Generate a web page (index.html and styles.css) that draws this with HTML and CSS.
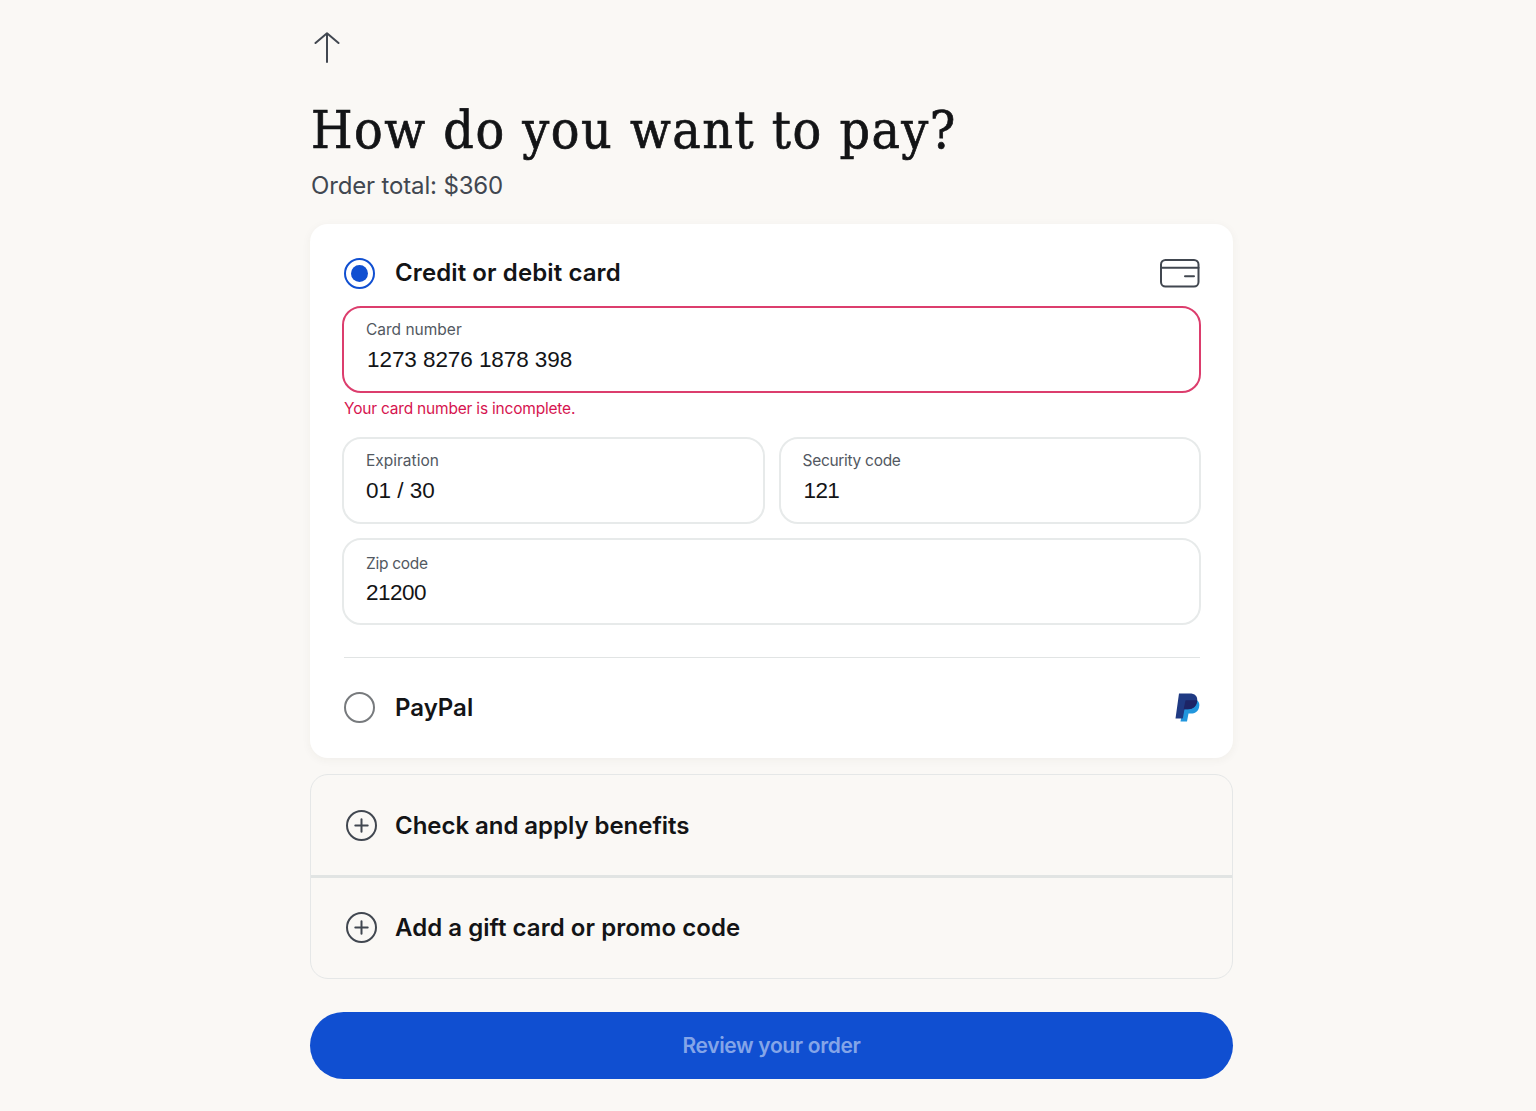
FILE: index.html
```html
<!DOCTYPE html>
<html lang="en">

<head>
    <meta charset="UTF-8">
    <meta name="viewport" content="width=device-width, initial-scale=1.0">
    <title>Payment</title>
    <link rel="stylesheet" href="styles.css">
</head>

<body>
    <main class="container">
        <a class="back" href="#" aria-label="Back">
            <svg width="26" height="32" viewBox="0 0 26 32">
                <path d="M13 30V1.500M1.500 11L13 1.300L24.500 11" />
            </svg>
        </a>
        <h1>How do you want to pay?</h1>
        <p class="total">Order total: $360</p>

        <section class="card">
            <div class="method">
                <span class="radio checked"></span>
                <h2 class="t-credit">Credit or debit card</h2>
                <svg class="card-icon" width="40" height="29" viewBox="0 0 40 29">
                    <rect x="1" y="1" width="37.500" height="26.500" rx="4.500" />
                    <path d="M1 8.800H38.500M25 17.200H34" />
                </svg>
            </div>
            <div class="fields">
                <div class="field error">
                    <label>Card number</label>
                    <div class="value v-card">1273 8276 1878 398</div>
                </div>
                <p class="error-text">Your card number is incomplete.</p>
                <div class="row">
                    <div class="field">
                        <label>Expiration</label>
                        <div class="value">01 / 30</div>
                    </div>
                    <div class="field">
                        <label class="tight">Security code</label>
                        <div class="value v-code">121</div>
                    </div>
                </div>
                <div class="field zip">
                    <label class="tight">Zip code</label>
                    <div class="value">21200</div>
                </div>
            </div>
            <div class="method paypal">
                <span class="radio"></span>
                <h2>PayPal</h2>
                <svg class="paypal-icon" width="25" height="29" viewBox="0 0 25 29">
                    <path fill="#2196dd" d="M10 7H21.500C24 8.500 25 11 24 14.500C23 18.500 20 20.500 16 20.500H13.500L12 28.500H5.500L6.300 24Z" />
                    <path fill="#1f3a83" d="M4 0.500H14.500C20 0.500 22.700 3 22.200 8C21.500 13.500 18 16.300 12.500 16.300H9.500L7.800 25.500H0.500Z" />
                    <path fill="#1d2465" d="M10.500 7.300H22.200C21.800 13.300 18.200 16.300 12.500 16.300H8.700Z" />
                </svg>
            </div>
        </section>

        <section class="extras">
            <div class="extra">
                <svg class="plus" width="31" height="31" viewBox="0 0 31 31">
                    <circle cx="15.500" cy="15.500" r="14.500" />
                    <path d="M9.300 15.500H21.700M15.500 9.300V21.700" />
                </svg>
                <h2>Check and apply benefits</h2>
            </div>
            <div class="extra">
                <svg class="plus" width="31" height="31" viewBox="0 0 31 31">
                    <circle cx="15.500" cy="15.500" r="14.500" />
                    <path d="M9.300 15.500H21.700M15.500 9.300V21.700" />
                </svg>
                <h2 class="t-gift">Add a gift card or promo code</h2>
            </div>
        </section>

        <button class="btn" type="button" disabled>Review your order</button>
    </main>
</body>

</html>
```
FILE: styles.css
```css
* {
    margin: 0;
    padding: 0;
    box-sizing: border-box;
}

body {
    background-color: #faf8f5;
    color: #131416;
    font-family: Inter, "Liberation Sans", sans-serif;
    padding: 32px 0 32px 7px;
}

.container {
    width: 923px;
    margin: 0 auto;
}

.back {
    display: block;
    width: 26px;
    height: 32px;
    margin-left: 4px;
}

svg {
    display: block;
    fill: none;
    stroke: #414750;
    stroke-width: 2;
    stroke-linecap: round;
    stroke-linejoin: round;
}

h1 {
    font-family: "DejaVu Serif Condensed", "DejaVu Serif", serif;
    font-stretch: condensed;
    font-size: 53px;
    font-weight: 400;
    line-height: 70px;
    letter-spacing: 1.53px;
    margin-top: 31px;
    padding-left: 1px;
    white-space: nowrap;
    -webkit-text-stroke: 0.7px #131416;
}

.total {
    font-size: 24px;
    line-height: 32px;
    color: #414750;
    margin-top: 5px;
    padding-left: 1px;
    letter-spacing: -0.15px;
}

/* payment methods */

.card {
    height: 534px;
    margin-top: 22px;
    padding: 33px 32px 0;
    border-radius: 18px;
    background-color: white;
    box-shadow: 0 2px 10px rgba(60, 50, 30, 0.05);
}

.method {
    display: flex;
    align-items: center;
    height: 32px;
    padding: 0 1px 0 2px;
}

h2 {
    font-size: 24px;
    font-weight: 600;
    line-height: 32px;
    margin-left: 20px;
    white-space: nowrap;
}

.t-credit {
    letter-spacing: 0.1px;
}

.radio {
    display: flex;
    align-items: center;
    justify-content: center;
    width: 31px;
    height: 31px;
    border: 2px solid #777a7d;
    border-radius: 50%;
}

.radio.checked {
    border-color: #104fd1;
}

.radio.checked::after {
    content: "";
    width: 17px;
    height: 17px;
    border-radius: 50%;
    background-color: #104fd1;
}

.card-icon,
.paypal-icon {
    margin-left: auto;
}

.paypal-icon {
    stroke: none;
}

.fields {
    margin: 17px 0 0;
}

.field {
    height: 87px;
    padding: 12px 22px 0;
    border: 2px solid #e7eaea;
    border-radius: 19px;
}

.field.error {
    border-color: #dc3d6d;
}

.field label {
    display: block;
    font-size: 15.5px;
    line-height: 20px;
    color: #525861;
}

.field .tight {
    letter-spacing: -0.3px;
}

.value {
    font-family: "Liberation Sans", Arial, sans-serif;
    font-size: 22.5px;
    line-height: 30px;
    margin-top: 5px;
}

.v-card,
.v-code {
    padding-left: 1px;
    letter-spacing: -0.07px;
}

.v-code {
    letter-spacing: -0.6px;
}

.error-text {
    font-size: 15.5px;
    line-height: 20px;
    margin: 6px 0 18px 2px;
    color: #d6144f;
    letter-spacing: -0.2px;
}

.row {
    display: grid;
    grid-template-columns: 1fr 1fr;
    gap: 14px;
    margin-bottom: 14px;
}

.zip label {
    margin-top: 2px;
}

.zip .value {
    margin-top: 4px;
    letter-spacing: -0.5px;
}

.paypal {
    height: 100px;
    margin: 32px 1px 0 2px;
    padding: 0;
    border-top: 1px solid #e1e4e4;
}

/* benefits and promo */

.extras {
    margin-top: 16px;
    border: 1px solid #e5e7e7;
    border-radius: 18px;
}

.extra {
    display: flex;
    align-items: center;
    height: 100px;
    padding: 1px 0 0 35px;
}

.extra + .extra {
    height: 103px;
    padding: 0 0 1px 35px;
    border-top: 3px solid #e1e4e3;
}

.extra h2 {
    margin-left: 18px;
    letter-spacing: -0.04px;
}

.extra .t-gift {
    letter-spacing: 0.04px;
}

.btn {
    display: block;
    width: 100%;
    height: 67px;
    margin-top: 33px;
    border: none;
    border-radius: 34px;
    background-color: #104fd1;
    color: #84a5e8;
    font-family: Inter, "Liberation Sans", sans-serif;
    font-size: 21px;
    font-weight: 600;
    letter-spacing: -0.35px;
}
```
